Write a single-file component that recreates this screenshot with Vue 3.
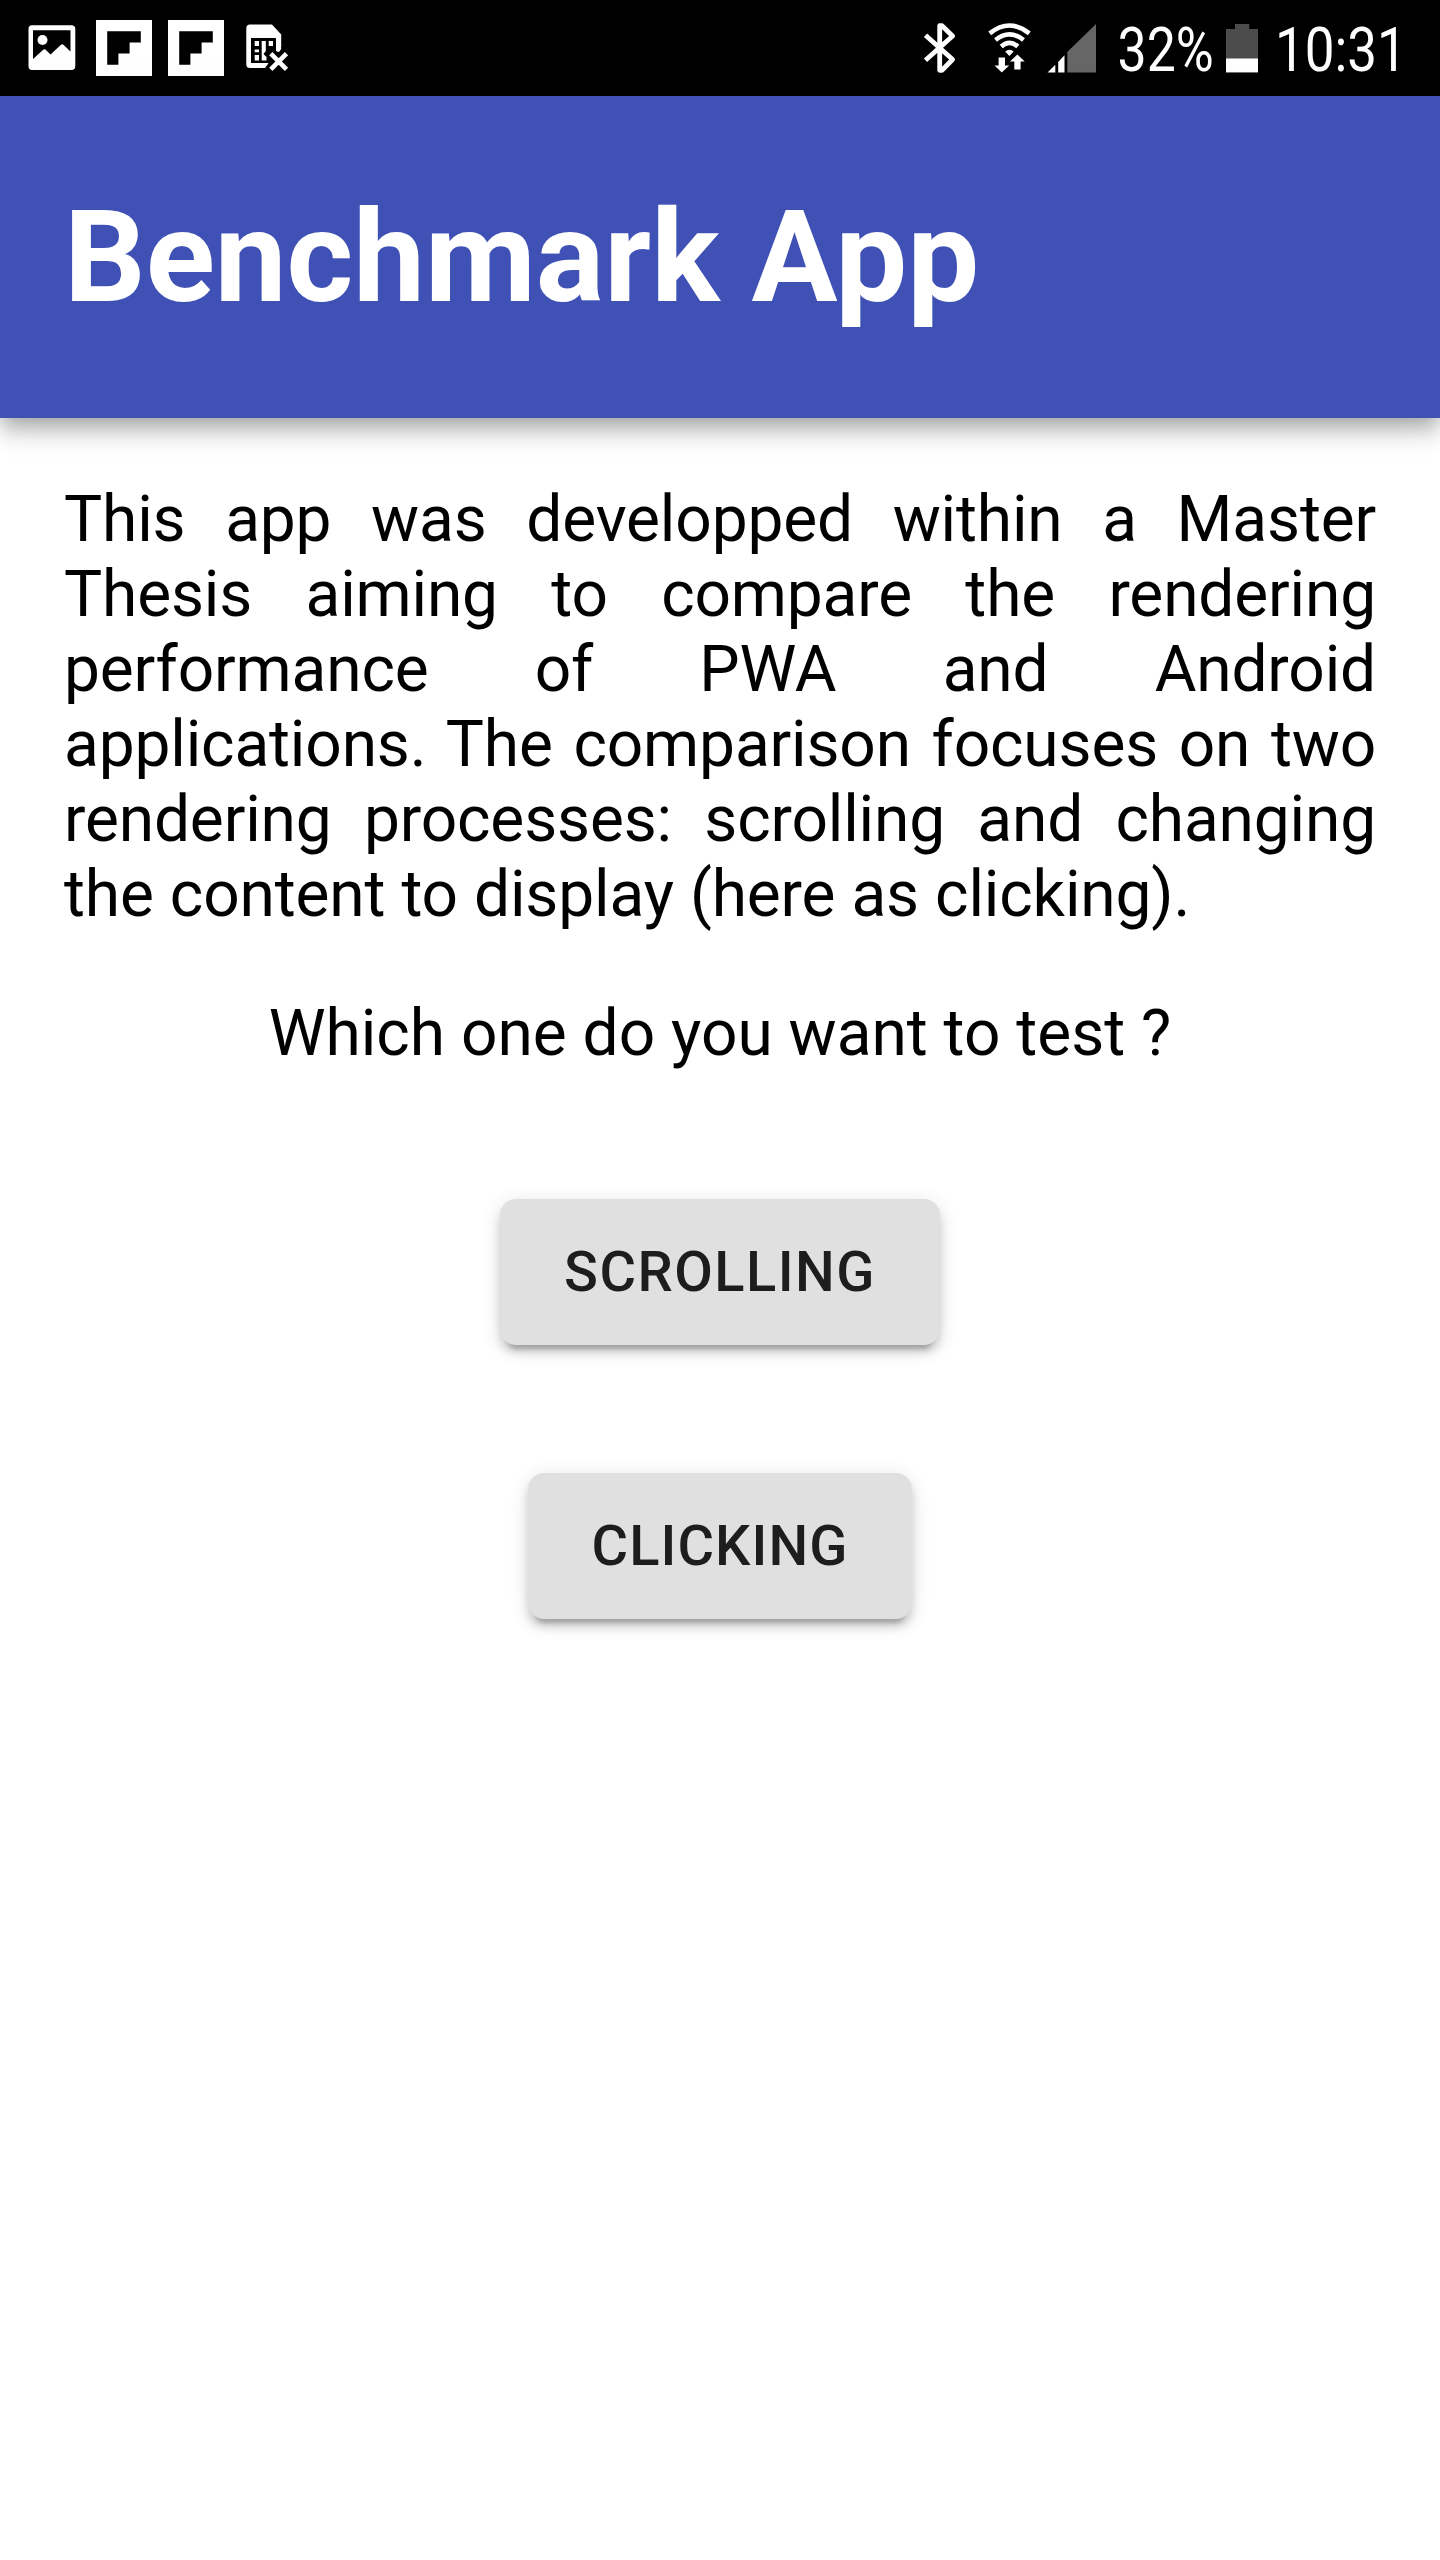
<script setup>
const tests = ['scrolling', 'clicking']
</script>

<template>
  <div class="screen">
    <div class="status">
      <div class="group">
        <svg class="picture" width="48" height="46" viewBox="0 0 48 46">
          <path fill="#fff" fill-rule="evenodd" d="M4 0.3H43.500Q47.300 0.300 47.300 4V41Q47.300 45 43.500 45H4Q0.500 45 0.500 41V4Q0.500 0.300 4 0.300ZM5 5.200V34L15.500 24.500Q16.500 23.800 17.500 24.500L22.500 29.500L33 19.700Q34.200 18.800 35.400 19.700L42.500 26.500V5.200Z" />
          <circle cx="14.500" cy="15" r="5" fill="#fff" />
        </svg>
        <svg v-for="n in 2" :key="n" class="flip" width="56" height="56" viewBox="0 0 56 56">
          <path fill="#fff" d="M0 0H56V56H0Z" />
          <path fill="#000" d="M11.200 11.200H44.800V22.400H33.600V33.600H22.400V44.800H11.200Z" />
        </svg>
        <svg class="sim" width="44" height="48" viewBox="0 0 44 48">
          <path fill="#fff" d="M4 0.500H26L35.200 10.500V44H4Q0.300 44 0.300 40.500V4.500Q0.300 0.500 4 0.500Z" />
          <path fill="#000" d="M5 14H30V39H5Z" />
          <path fill="#fff" d="M8.700 17H13V22H8.700ZM8.700 25.500H13V28.300H8.700ZM8.700 31H13V36.500H8.700ZM15.700 17H19.800V27L17.500 30L20.500 33V36.500H15.700ZM22.700 17H27V22H22.700Z" />
          <path fill="#000" d="M44 22H36L32.500 28L27 24L19 29L23.500 36L22 40L16 48H44Z" />
          <path fill="#fff" d="M30 24H35.200V25L33 28L30 27ZM15 44L20 39H14V44Z" />
          <path stroke="#fff" stroke-width="4.600" d="M24.800 29.700L40.500 45.400M40.500 29.700L24.800 45.400" />
        </svg>
      </div>
      <div class="group">
        <svg class="bluetooth" width="34" height="52" viewBox="0 0 34 52">
          <path fill="none" stroke="#fff" stroke-width="4.800" stroke-linejoin="round" d="M2.500 13.300L29.600 37.500L19 48.300H16.700V3.700H19L29.600 14L2.500 38.200" />
        </svg>
        <svg class="wifi" width="44" height="50" viewBox="0 0 44 50">
          <g fill="none" stroke="#fff" stroke-width="4.600">
            <path d="M1.700 10.400Q21.500 -5.400 41.300 10.400" />
            <path d="M7.500 17Q21.500 5.800 35.500 17" />
            <path d="M13.200 23.500Q21.500 16.200 29.800 23.500" />
          </g>
          <path fill="#fff" d="M17.200 28.500Q21.400 25 25.700 28.500L21.400 33Z" />
          <path fill="#fff" d="M10.600 34.500H17V42.500H21.200L13.800 49.500L6.500 42.500H10.600ZM26.300 46.500H32.600V38.500H36.700L29.400 31.500L22 38.500H26.300Z" />
        </svg>
        <svg class="signal" width="50" height="49" viewBox="0 0 50 49">
          <path fill="#fff" d="M0.500 48.500L8.300 40.700V48.500ZM11.200 38L17.500 31.200V48.500H11.200Z" />
          <path fill="#666" d="M20.300 28L49 0V48.500H20.300Z" />
        </svg>
        <span class="percent">32%</span>
        <svg class="battery" width="32" height="49" viewBox="0 0 32 49">
          <path fill="#4c4c4c" d="M9 0H23.200V5H32V49H0V5H9Z" />
          <path fill="#fff" d="M0 34.500H32V48.200H0Z" />
        </svg>
        <span class="clock">10:31</span>
      </div>
    </div>
    <header class="header">
      <h1>Benchmark App</h1>
    </header>
    <main class="content">
      <p class="intro">
        This app was developped within a Master Thesis aiming to compare the rendering performance of PWA and Android applications. The comparison focuses on two rendering processes: scrolling and changing the content to display (here as clicking).
      </p>
      <p class="question">Which one do you want to test ?</p>
      <button v-for="test in tests" :key="test" class="button" :class="test">{{ test }}</button>
    </main>
  </div>
</template>

<style>
body {
  margin: 0;
  background: #fff;
}
</style>

<style scoped>
.screen {
  width: 1440px;
  height: 2560px;
  overflow: hidden;
  display: flex;
  flex-direction: column;
  background: #fff;
  color: #000;
  font-family: Roboto, "Liberation Sans", sans-serif;
  font-size: 64px;
}
.status {
  height: 96px;
  flex: none;
  display: flex;
  justify-content: space-between;
  background: #000;
  color: #fff;
}
.group {
  display: flex;
  align-items: flex-start;
}
.group svg {
  display: block;
  flex: none;
}
.picture { margin: 25px 0 0 28px; }
.flip { margin: 20px 0 0 20px; }
.flip + .flip { margin-left: 16px; }
.sim { margin: 24px 0 0 22px; }
.bluetooth { margin-top: 22px; }
.wifi { margin: 23px 0 0 31px; }
.signal { margin: 23.5px 0 0 15px; }
.battery { margin: 24px 0 0; }
.percent,
.clock {
  flex: none;
  font-size: 61px;
  line-height: 72px;
  margin-top: 14px;
  transform-origin: 0 0;
  white-space: nowrap;
}
.percent {
  width: 109px;
  margin-left: 20px;
  transform: translateX(0.5px) scaleX(0.85);
}
.clock {
  width: 165px;
  margin-left: 17px;
  transform: scaleX(0.868);
}
.header {
  position: relative;
  height: 322px;
  flex: none;
  display: flex;
  align-items: center;
  padding: 0 64px;
  box-sizing: border-box;
  background: #3f51b5;
  color: #fff;
  box-shadow:
    0 8px 16px -4px rgba(0, 0, 0, 0.2),
    0 16px 20px 0 rgba(0, 0, 0, 0.14),
    0 4px 40px 0 rgba(0, 0, 0, 0.12);
}
h1 {
  margin: 0;
  font-size: 128px;
  font-weight: 700;
  line-height: 150px;
}
.content {
  display: flex;
  flex-direction: column;
  align-items: center;
  padding: 64px;
}
p {
  margin: 0;
  line-height: 75px;
}
.intro {
  text-align: justify;
  letter-spacing: -0.15px;
  word-spacing: 0.4px;
}
.question {
  margin-top: 64px;
}
.button {
  height: 146px;
  margin: 128px 0 0;
  padding: 0 64px;
  border: 0;
  border-radius: 16px;
  background: #e0e0e0;
  color: #1d1d1d;
  font-family: inherit;
  font-size: 56px;
  font-weight: 500;
  text-transform: uppercase;
  box-shadow:
    0 12px 4px -8px rgba(0, 0, 0, 0.2),
    0 8px 8px 0 rgba(0, 0, 0, 0.14),
    0 4px 20px 0 rgba(0, 0, 0, 0.12);
}
.scrolling { letter-spacing: 1.5px; }
.clicking { letter-spacing: 1.06px; }
</style>
